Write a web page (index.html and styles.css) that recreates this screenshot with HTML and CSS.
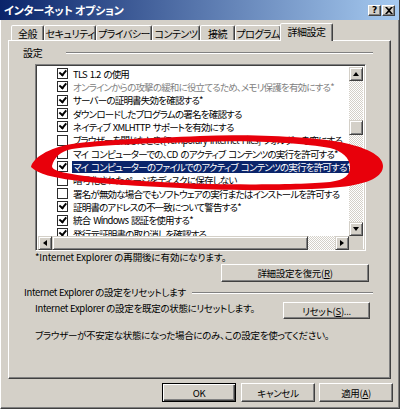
FILE: index.html
```html
<!DOCTYPE html>
<html lang="ja">
<head>
<meta charset="utf-8">
<title>インターネット オプション</title>
<link rel="stylesheet" href="styles.css">
</head>
<body>
<div class="window">
  <div class="titlebar">
    <span class="title">インターネット オプション</span>
    <div class="tb-buttons">
      <span class="tb-btn help">?</span>
      <span class="tb-btn close"><svg width="8" height="7" viewBox="0 0 8 7"><path d="M0 0h2l2 2 2-2h2L5 3.5 8 7H6L4 5 2 7H0l3-3.5z" fill="#000"/></svg></span>
    </div>
  </div>
  <div class="tabs">
    <div class="tab w1">全般</div>
    <div class="tab w2">セキュリティ</div>
    <div class="tab w3">プライバシー</div>
    <div class="tab w4">コンテンツ</div>
    <div class="tab w5">接続</div>
    <div class="tab w6">プログラム</div>
    <div class="tab active">詳細設定</div>
  </div>
  <div class="panel">
    <div class="section-head settings-head">
      <span class="head-label">設定</span>
      <span class="etch settings-etch"></span>
    </div>
    <div class="listbox">
      <div class="list-main">
        <div class="rows">
          <div class="row"><span class="cb checked"></span><span class="label">TLS 1.2 の使用</span></div>
          <div class="row"><span class="cb checked"></span><span class="label gray">オンラインからの攻撃の緩和に役立てるため、メモリ保護を有効にする*</span></div>
          <div class="row"><span class="cb checked"></span><span class="label">サーバーの証明書失効を確認する*</span></div>
          <div class="row"><span class="cb checked"></span><span class="label">ダウンロードしたプログラムの署名を確認する</span></div>
          <div class="row"><span class="cb checked"></span><span class="label">ネイティブ XMLHTTP サポートを有効にする</span></div>
          <div class="row"><span class="cb"></span><span class="label">ブラウザーを閉じたとき、[Temporary Internet Files] フォルダーを空にする</span></div>
          <div class="row"><span class="cb"></span><span class="label">マイ コンピューターでの、CD のアクティブ コンテンツの実行を許可する*</span></div>
          <div class="row"><span class="cb checked"></span><span class="label selected">マイ コンピューターのファイルでのアクティブ コンテンツの実行を許可する*</span></div>
          <div class="row"><span class="cb"></span><span class="label">暗号化されたページをディスクに保存しない</span></div>
          <div class="row"><span class="cb"></span><span class="label">署名が無効な場合でもソフトウェアの実行またはインストールを許可する</span></div>
          <div class="row"><span class="cb checked"></span><span class="label">証明書のアドレスの不一致について警告する*</span></div>
          <div class="row"><span class="cb checked"></span><span class="label">統合 Windows 認証を使用する*</span></div>
          <div class="row"><span class="cb checked"></span><span class="label">発行元証明書の取り消しを確認する</span></div>
        </div>
        <div class="vscroll">
          <span class="sb-btn"><span class="arrow up"></span></span>
          <span class="track v-track1"></span>
          <span class="thumb v-thumb"></span>
          <span class="track v-track2"></span>
          <span class="sb-btn"><span class="arrow down"></span></span>
        </div>
      </div>
      <div class="hscroll">
        <span class="sb-btn"><span class="arrow left"></span></span>
        <span class="thumb h-thumb"></span>
        <span class="track h-track"></span>
        <span class="sb-btn"><span class="arrow right"></span></span>
        <span class="corner"></span>
      </div>
    </div>
    <p class="note note1">*Internet Explorer の再開後に有効になります。</p>
    <button class="btn restore">詳細設定を復元(<u>R</u>)</button>
    <div class="section-head reset-head">
      <span class="head-label">Internet Explorer の設定をリセットします</span>
      <span class="etch reset-etch"></span>
    </div>
    <div class="reset-row">
      <span class="reset-text">Internet Explorer の設定を既定の状態にリセットします。</span>
      <button class="btn reset-btn">リセット(<u>S</u>)...</button>
    </div>
    <p class="note note2">ブラウザーが不安定な状態になった場合にのみ、この設定を使ってください。</p>
  </div>
  <div class="footer">
    <button class="btn default">OK</button>
    <button class="btn cancel">キャンセル</button>
    <button class="btn apply">適用(<u>A</u>)</button>
  </div>
  <svg class="mark" width="400" height="409" viewBox="0 0 400 409">
    <path fill="#e8000b" fill-rule="evenodd" d="M31 167 C33 158 48 148 72 144 C100 140 150 138 200 136 C250 134 310 137 340 142 C365 147 383 155 383 166 C383 176 370 184 340 187 C300 191 220 191 180 188 C140 186 100 184 72 180 C55 178 38 174 31 167 Z M52 166 C54 158 60 151 72 149 C100 145 150 143 200 142 C250 140 300 143 330 148 C342 151 350 158 350 167 C350 175 345 180 330 182 C300 185 220 185 180 183 C140 181 100 179 72 174 C60 172 52 170 52 166 Z"/>
  </svg>
</div>
</body>
</html>
```

FILE: styles.css
```css
* {
  box-sizing: border-box;
  margin: 0;
  padding: 0;
}

body {
  margin: 0;
  width: 400px;
  height: 409px;
  overflow: hidden;
  background: #d4d0c8;
  font-family: "Noto Sans CJK JP", "Noto Sans", sans-serif;
  font-size: 9.5px;
  letter-spacing: -0.3px;
  font-feature-settings: "palt";
  color: #000;
  white-space: nowrap;
}

.window {
  position: relative;
  width: 400px;
  height: 409px;
  background: #d4d0c8;
  border-left: 1px solid #fff;
  border-right: 1px solid #404040;
  border-bottom: 1px solid #404040;
  box-shadow: inset -1px -1px 0 #808080;
}

/* title bar */
.titlebar {
  height: 20px;
  margin-left: -1px;
  display: flex;
  align-items: center;
  justify-content: space-between;
  padding: 0 4px 0 4px;
  background: linear-gradient(to right, #0a246a, #a6caf0);
}

.title {
  color: #fff;
  font-weight: bold;
  font-size: 11px;
  line-height: 14px;
  letter-spacing: -0.2px;
}

.tb-buttons {
  display: flex;
}

.tb-btn {
  width: 13px;
  height: 11px;
  background: #d4d0c8;
  border: 1px solid;
  border-color: #fff #404040 #404040 #fff;
  box-shadow: inset -1px -1px 0 #808080;
  display: flex;
  align-items: center;
  justify-content: center;
  font-family: "DejaVu Sans", sans-serif;
  font-weight: bold;
  font-size: 9px;
  line-height: 9px;
  letter-spacing: 0;
}

.tb-btn.close {
  margin-left: 1px;
}

/* tabs */
.tabs {
  display: flex;
  align-items: flex-end;
  height: 20px;
  padding-left: 10px;
  position: relative;
  z-index: 2;
}

.tab {
  height: 15px;
  border: 1px solid;
  border-bottom: none;
  border-color: #fff #404040 transparent #fff;
  border-radius: 2px 2px 0 0;
  box-shadow: inset -1px 0 0 #808080;
  display: flex;
  align-items: center;
  justify-content: center;
  font-size: 10px;
  line-height: 13px;
  padding-top: 1px;
  background: #d4d0c8;
  letter-spacing: -0.5px;
}

.w1 { width: 33px; }
.w2 { width: 52px; }
.w3 { width: 56px; }
.w4 { width: 48px; }
.w5 { width: 35px; }
.w6 { width: 46px; }

.tab.active {
  width: 53px;
  height: 18px;
  margin-bottom: -1px;
  margin-left: -1px;
  padding-top: 0;
  padding-bottom: 3px;
}

/* panel */
.panel {
  margin-left: 7px;
  width: 383px;
  height: 339px;
  border: 1px solid;
  border-color: #fff #404040 #404040 #fff;
  box-shadow: inset -1px -1px 0 #808080;
  padding: 6px 0 0 1px;
  display: flex;
  flex-direction: column;
  align-items: flex-start;
}

.section-head {
  display: flex;
  align-items: center;
  height: 11px;
  line-height: 11px;
}

.settings-head {
  margin-left: 13px;
  width: 350px;
  font-size: 10px;
}

.etch {
  display: block;
  flex: 1;
  height: 2px;
  border-top: 1px solid #808080;
  border-bottom: 1px solid #fff;
}

.settings-etch {
  margin-left: 24px;
}

/* list box */
.listbox {
  margin-top: 6px;
  margin-left: 25px;
  width: 331px;
  height: 187px;
  border: 1px solid;
  border-color: #808080 #fff #fff #808080;
  box-shadow: inset 1px 1px 0 #404040, inset -1px -1px 0 #d4d0c8;
  padding: 2px;
  background: #fff;
  display: flex;
  flex-direction: column;
}

.list-main {
  display: flex;
  height: 169px;
}

.rows {
  flex: 1;
  overflow: hidden;
  padding-left: 19px;
  min-width: 0;
  letter-spacing: -0.8px;
  word-spacing: 1.5px;
}

.row {
  display: flex;
  align-items: center;
  height: 13.333px;
}

.cb {
  flex: none;
  position: relative;
  width: 11px;
  height: 11px;
  border: 1px solid #2c2c2c;
  background: #fff;
  margin-right: 4px;
}

.cb.checked::after {
  content: "";
  position: absolute;
  left: 2px;
  top: 1px;
  width: 5px;
  height: 3px;
  border-left: 2px solid #000;
  border-bottom: 2px solid #000;
  transform: rotate(-50deg);
  transform-origin: 40% 60%;
}

.label {
  line-height: 12px;
  padding: 0 1px;
}

.label.gray {
  color: #808080;
}

.label.selected {
  background: #0a246a;
  color: #fff;
}

/* scrollbars */
.vscroll {
  width: 14px;
  flex: none;
  display: flex;
  flex-direction: column;
}

.sb-btn {
  flex: none;
  width: 14px;
  height: 14px;
  background: #d4d0c8;
  border: 1px solid;
  border-color: #d4d0c8 #404040 #404040 #d4d0c8;
  box-shadow: inset 1px 1px 0 #fff, inset -1px -1px 0 #808080;
  display: flex;
  align-items: center;
  justify-content: center;
}

.arrow {
  width: 0;
  height: 0;
  border-style: solid;
  border-color: transparent;
}

.arrow.up {
  border-width: 0 3.5px 4px 3.5px;
  border-bottom-color: #000;
}

.arrow.down {
  border-width: 4px 3.5px 0 3.5px;
  border-top-color: #000;
}

.arrow.left {
  border-width: 3.5px 4px 3.5px 0;
  border-right-color: #000;
}

.arrow.right {
  border-width: 3.5px 0 3.5px 4px;
  border-left-color: #000;
}

.track {
  background: repeating-conic-gradient(#fff 0 25%, #d4d0c8 0 50%) 0 0 / 2px 2px;
}

.thumb {
  background: #d4d0c8;
  border: 1px solid;
  border-color: #d4d0c8 #404040 #404040 #d4d0c8;
  box-shadow: inset 1px 1px 0 #fff, inset -1px -1px 0 #808080;
}

.v-track1 { height: 39px; }
.v-thumb { height: 15px; }
.v-track2 { flex: 1; }

.hscroll {
  display: flex;
  height: 14px;
  flex: none;
}

.h-thumb { width: 256px; }
.h-track { flex: 1; }

.corner {
  width: 14px;
  background: #d4d0c8;
}

/* notes & buttons */
.note {
  margin-left: 25px;
  line-height: 13px;
}

.note1 {
  letter-spacing: -0.1px;
}

.btn {
  font: inherit;
  letter-spacing: -0.3px;
  font-feature-settings: "palt";
  color: #000;
  background: #d4d0c8;
  border: 1px solid;
  border-color: #fff #404040 #404040 #fff;
  box-shadow: inset -1px -1px 0 #808080;
  display: flex;
  align-items: center;
  justify-content: center;
  line-height: 12px;
}

.btn u {
  text-decoration: underline;
  text-underline-offset: 1px;
}

.restore {
  margin-left: 211px;
  width: 148px;
  height: 18px;
}

.reset-head {
  margin-top: 4px;
  margin-left: 14px;
  width: 349px;
  height: 13px;
}

.reset-etch {
  margin-left: 6px;
}

.reset-row {
  margin-top: 3px;
  margin-left: 25px;
  width: 335px;
  display: flex;
  justify-content: space-between;
  align-items: flex-start;
}

.reset-text {
  line-height: 13px;
}

.reset-btn {
  width: 87px;
  height: 17px;
}

.note2 {
  margin-top: 10px;
}

/* footer */
.footer {
  display: flex;
  margin-top: 4px;
  padding-left: 161px;
}

.footer .btn {
  width: 74px;
  height: 19px;
}

.btn.default {
  border-color: #000;
  box-shadow: inset 1px 1px 0 #fff, inset -1px -1px 0 #404040, inset -2px -2px 0 #808080;
}

.cancel {
  margin-left: 5px;
}

.apply {
  margin-left: 4px;
}

/* red annotation */
.mark {
  position: absolute;
  left: -1px;
  top: 0;
  pointer-events: none;
  z-index: 5;
}
```
